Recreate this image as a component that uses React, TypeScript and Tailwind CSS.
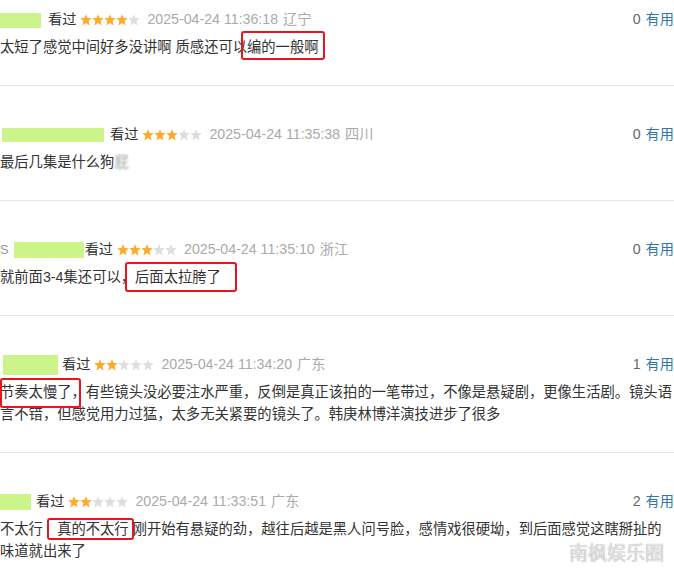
import React from 'react';

type Review = {
  nameCls: string;
  prefix?: string;
  stars: number;
  time: string;
  region: string;
  useful: number;
  content: React.ReactNode;
};

const Star: React.FC<{ on: boolean }> = ({ on }) => (
  <svg width="12" height="12" viewBox="0 0 24 24" className="block">
    <polygon
      points="12,0.5 15.1,8 23.5,8.6 17.1,14 19.1,22.8 12,18 4.9,22.8 6.9,14 0.5,8.6 8.9,8"
      fill={on ? '#ffa92a' : '#dedede'}
    />
  </svg>
);

// red annotation box drawn over the text
const Mark: React.FC<{ box: string; children: React.ReactNode }> = ({ box, children }) => (
  <span className="relative inline-block leading-[22px]">
    {children}
    <span className={`pointer-events-none absolute rounded-[3px] border-2 border-[#e8161c] ${box}`} />
  </span>
);

const reviews: Review[] = [
  {
    nameCls: 'w-[41px] h-[15px] mr-[7px]',
    stars: 4,
    time: '2025-04-24 11:36:18',
    region: '辽宁',
    useful: 0,
    content: (
      <>
        太短了感觉中间好多没讲啊 质感还可以
        <Mark box="-top-[5px] -bottom-[2px] -left-[6px] -right-[6px]">编的一般啊</Mark>
      </>
    ),
  },
  {
    nameCls: 'ml-[2px] w-[102px] h-[14px] mr-[6px]',
    stars: 3,
    time: '2025-04-24 11:35:38',
    region: '四川',
    useful: 0,
    content: (
      <>
        最后几集是什么狗
        <span className="inline-block text-[#999] blur-[1px]">屁</span>
      </>
    ),
  },
  {
    nameCls: 'ml-[5px] w-[70px] h-[16px] mr-[1px]',
    prefix: 'S',
    stars: 3,
    time: '2025-04-24 11:35:10',
    region: '浙江',
    useful: 0,
    content: (
      <>
        就前面3-4集还可以，
        <Mark box="-top-[4px] -bottom-[4px] -left-[10px] -right-[16px]"> 后面太拉胯了</Mark>
      </>
    ),
  },
  {
    nameCls: 'ml-[3px] w-[55px] h-[20px] mr-[4px]',
    stars: 2,
    time: '2025-04-24 11:34:20',
    region: '广东',
    useful: 1,
    content: (
      <>
        <Mark box="-top-[3px] -bottom-[5px] left-0 right-[5px]">节奏太慢了，</Mark>
        有些镜头没必要注水严重，反倒是真正该拍的一笔带过，不像是悬疑剧，更像生活剧。镜头语言不错，但感觉用力过猛，太多无关紧要的镜头了。韩庚林博洋演技进步了很多
      </>
    ),
  },
  {
    nameCls: 'w-[31px] h-[16px] mr-[5px]',
    stars: 2,
    time: '2025-04-24 11:33:51',
    region: '广东',
    useful: 2,
    content: (
      <>
        {'不太行\u3000'}
        <Mark box="top-0 bottom-0 -left-[10px] -right-[5px]">真的不太行</Mark>
        {' '}刚开始有悬疑的劲，越往后越是黑人问号脸，感情戏很硬坳，到后面感觉这瞎掰扯的味道就出来了
      </>
    ),
  },
];

const App: React.FC = () => {
  return (
    <div className="relative h-[575px] w-[674px] overflow-hidden bg-white font-['Liberation_Sans','Noto_Sans_CJK_SC',sans-serif] text-[#333]">
      {reviews.map((r, i) => (
        <div
          key={i}
          className={`border-b border-[#e8e8e8] pb-[27px] ${i === 0 ? 'pt-[10px]' : 'pt-[39px]'}`}
        >
          <div className="flex h-5 items-center justify-between text-[14.2px]">
            <div className="flex items-center">
              {r.prefix && <span className="text-[#999] text-[13px]">{r.prefix}</span>}
              <span className={`block bg-[#cbf58a] ${r.nameCls}`} />
              <span className="text-[#333]">看过</span>
              <span className="ml-[4px] flex">
                {[0, 1, 2, 3, 4].map((s) => (
                  <Star key={s} on={s < r.stars} />
                ))}
              </span>
              <span className="ml-[7px] text-[#aaa]">{r.time}</span>
              <span className="ml-[5px] text-[#aaa]">{r.region}</span>
            </div>
            <div className="flex items-center">
              <span className="text-[#666]">{r.useful}</span>
              <span className="ml-[5px] text-[#3377aa]">有用</span>
            </div>
          </div>
          <p className="mt-[6px] text-[14.3px] leading-[22px] text-[#333]">{r.content}</p>
        </div>
      ))}
      <div className="absolute right-[10px] bottom-[10px] text-[19px] leading-[22px] text-[#e4e4e4] [text-shadow:0_0_1px_#8c8c8c]">
        南枫娱乐圈
      </div>
    </div>
  );
};

export default App;
